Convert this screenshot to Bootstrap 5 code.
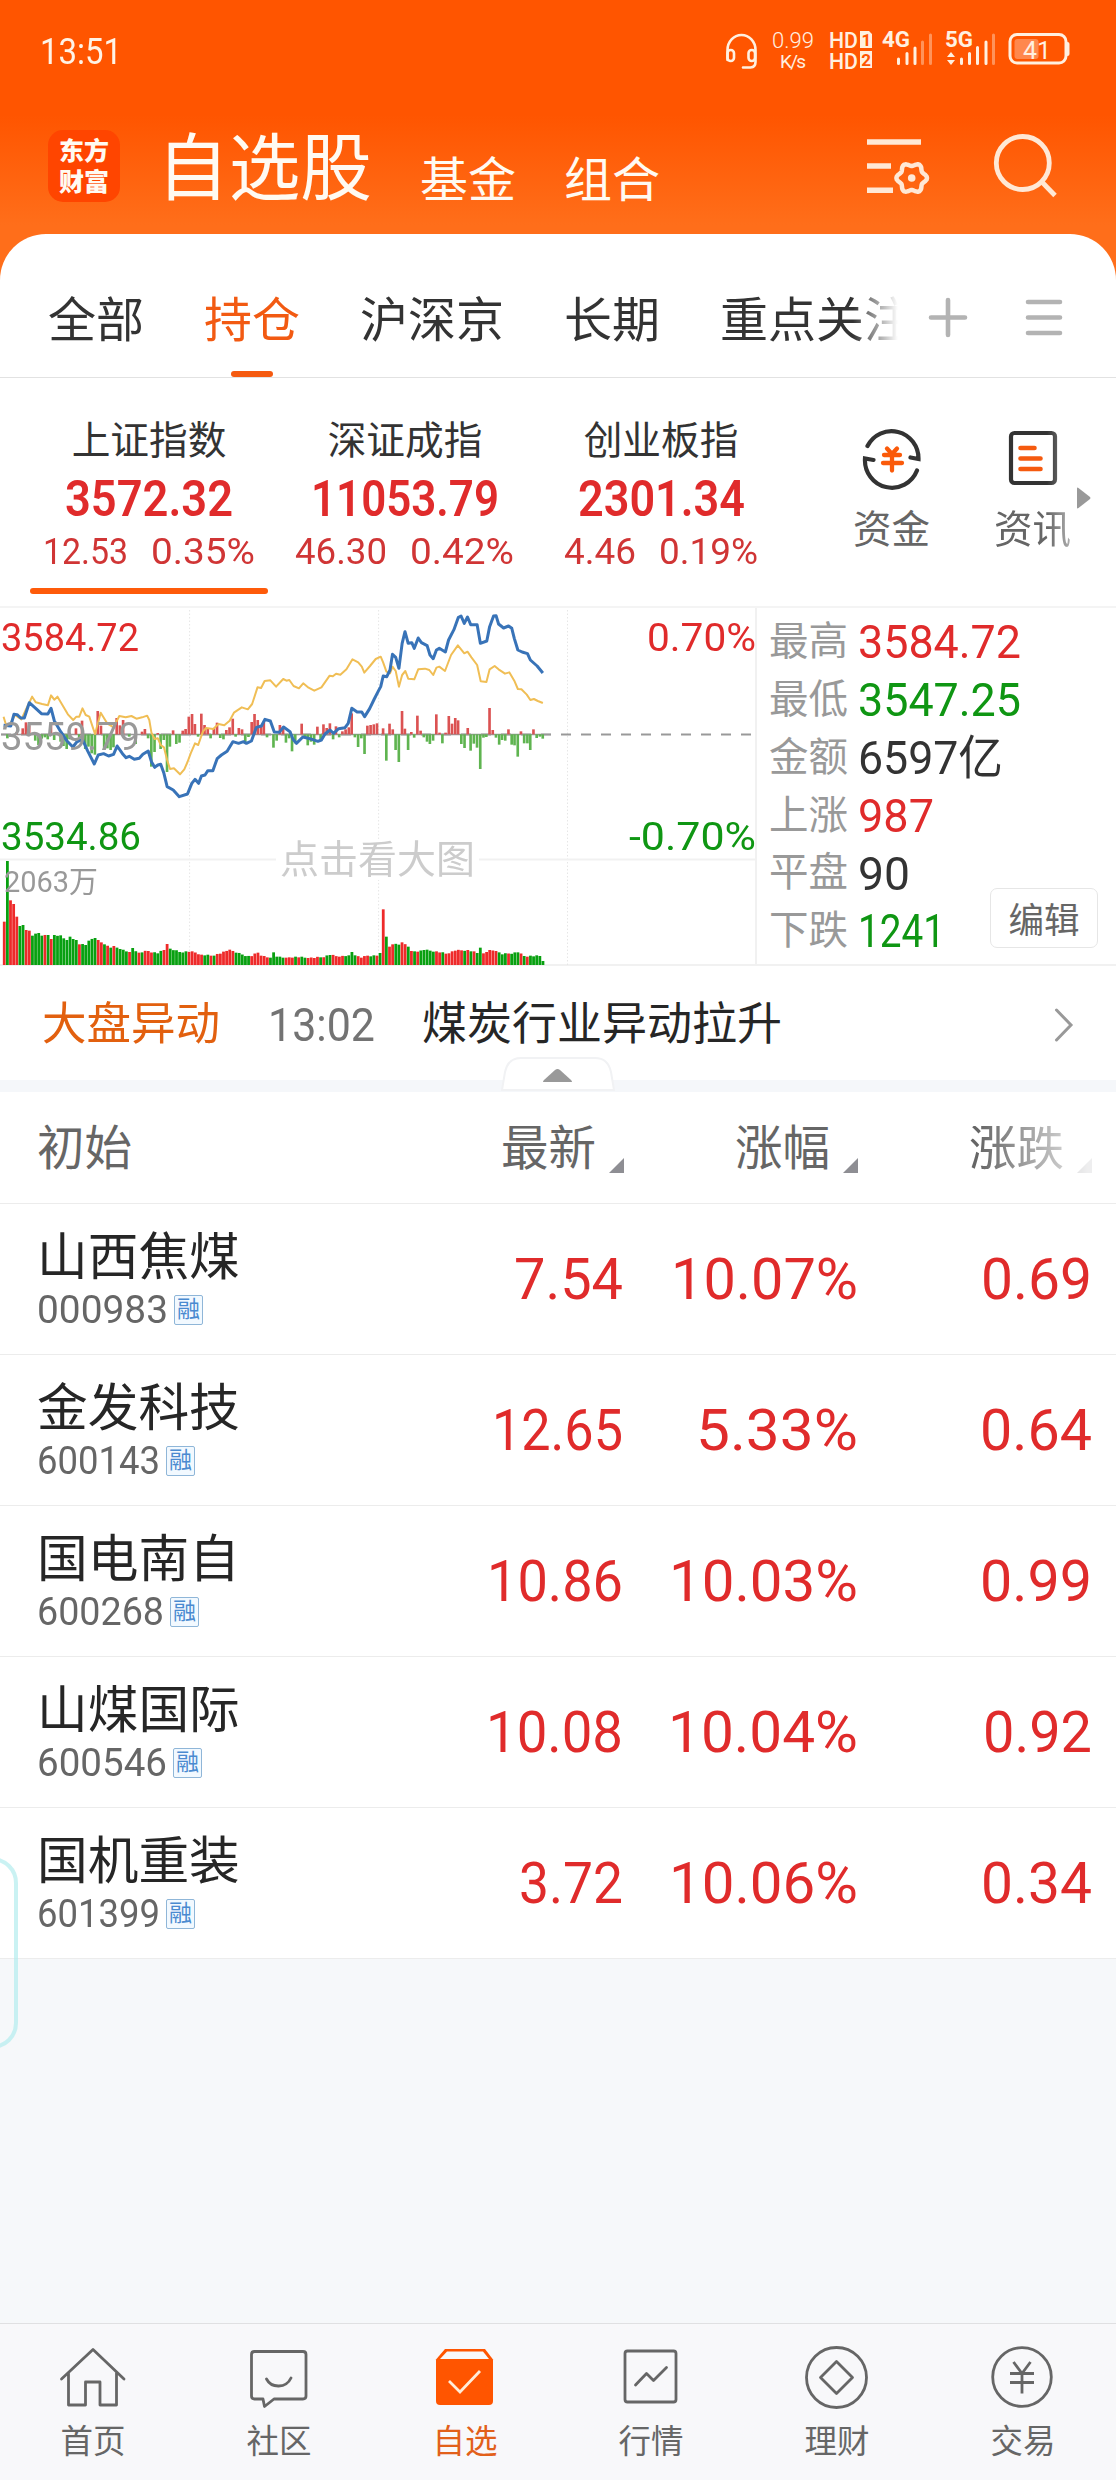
<!DOCTYPE html>
<html lang="zh-CN">
<head>
<meta charset="utf-8">
<meta name="viewport" content="width=device-width, initial-scale=1">
<title>自选股</title>
<link href="https://cdn.jsdelivr.net/npm/bootstrap@5.3.0/dist/css/bootstrap.min.css" rel="stylesheet">
<style>
  body{width:1116px;height:2480px;margin:0;overflow:hidden;background:#f6f8fa;color:#262626;
    font-family:Roboto,"Noto Sans CJK SC",sans-serif;line-height:1;-webkit-font-smoothing:antialiased}
  svg{display:block;flex:none}
  .fit{display:inline-block;white-space:nowrap;transform-origin:0 50%;flex:none}
  .up{color:#e02b2b}.down{color:#0f9613}.g3{color:#333}.g6{color:#666}.g9{color:#999}
  .top-area{height:280px;background:linear-gradient(#ff5500 0,#ff5500 115px,#ff6e1a 225px)}
  .status{height:100px;padding:2px 0 0 40px;font-size:37px;color:#fff3e6}
  .titles{height:134px;padding-left:48px;color:#fffaf2}
  .logo{width:72px;height:72px;border-radius:15px;background:#ff4500;font:900 25px/31px "Noto Sans CJK SC",sans-serif;margin:30px 37px 0 0;padding:4px 0;text-align:center}
  .t-main{font-size:72.5px;line-height:139px}
  .t-sub{font-size:48px;line-height:162px}
  .sheet{margin-top:-46px;border-radius:46px 46px 0 0;background:#fff;position:relative}
  .tabs{height:144px;border-bottom:1px solid #e2e2e2;padding-left:48px;font-size:48px}
  .tab-list{gap:60px;width:852px;overflow:hidden;line-height:113px;height:143px;
    -webkit-mask-image:linear-gradient(90deg,#000 805px,transparent 850px);mask-image:linear-gradient(90deg,#000 805px,transparent 850px)}
  .tab-list span{padding-top:30px}
  .tab-on{color:#f25a12;position:relative}
  .tab-on::after{content:"";position:absolute;left:27px;bottom:0;width:42px;height:6px;border-radius:3px;background:#f55a10}
  .indices{height:230px;padding-left:21px;border-bottom:2px solid #f4f4f4}
  .idx{width:256px;padding-top:38px;position:relative}
  .idx-name{font-size:38.7px;line-height:50px;color:#333}
  .idx-val{font-size:50px;line-height:56px;font-weight:600;margin-top:5px}
  .idx-chg{font-size:36px;line-height:40px;margin-top:5px;color:#d03535}
  .idx-chg .fit{margin-left:-1px}
  .idx-on::after{content:"";position:absolute;left:9px;top:210px;width:238px;height:6px;border-radius:3px;background:#fe5b0a}
  .tool{width:141px;padding-top:48px;font-size:38.5px;color:#666}
  .tool svg{margin-bottom:21px}
  .tool-fade{-webkit-mask-image:linear-gradient(90deg,#000 85px,rgba(0,0,0,.5) 110px);mask-image:linear-gradient(90deg,#000 85px,rgba(0,0,0,.5) 110px)}
  .quote{height:358px;border-bottom:2px solid #f1f1f1}
  .chart{width:757px;height:358px;border-right:2px solid #f1f1f1;position:relative}
  .chart-tag{position:absolute;font-size:38.5px;line-height:40px}
  .facts{padding:5px 0 0 12px;position:relative}
  .fact{height:57.8px;font-size:39.5px;color:#999;gap:10px}
  .fact b{font-weight:400;font-size:47px}
  .edit-btn{position:absolute;left:233px;top:280px;width:108px;height:60px;border:1px solid #e6e6e6;border-radius:7px;background:#fff;color:#666;font-size:35.5px;padding:4px 0 0;line-height:56px}
  .ticker{height:114px;font-size:45px;padding:3px 0 0 42px;position:relative}
  .fold{position:absolute;left:501px;top:91px;z-index:2}
  .band{height:12px;background:#f5f7fa}
  .head-row{height:112px;border-bottom:1px solid #ececec;font-size:47.5px;color:#666;padding:4px 0 0 37px}
  .stock{height:151px;border-bottom:1px solid #ececec;padding-left:38px}
  .c1{width:351px}.c2{width:236px}.c3{width:234px}.c4{width:234px}
  .stock .c1{width:349px}.stock .c3{width:235px}
  .s-name{font-size:50.7px;line-height:60px;margin:-1px 0 0 -1px}
  .s-code{font-size:38.5px;line-height:40px;gap:6px;margin:2px 0 0 -1px;color:#666}
  .rong{width:29px;height:30px;border:1.5px solid #8fb6d8;border-radius:2px;background:#f2f9ff;color:#4a8ad0;font-size:23px;line-height:28px;text-align:center}
  .price{font-size:58px}
  .sort{margin:32px 0 0 13px}
  .hfade{-webkit-mask-image:linear-gradient(90deg,#000 120px,rgba(0,0,0,.15) 230px);mask-image:linear-gradient(90deg,#000 120px,rgba(0,0,0,.15) 230px)}
  .filler{height:364px}
  .bottom{height:157px;border-top:1px solid #e0e0e2;background:#f8f8fa;font-size:32.5px;color:#666}
  .bottom>div{width:186px;padding-top:17px}
  .bottom svg{margin-bottom:13px}
  .on{color:#e2601a}
  .side-handle{position:absolute;left:-34px;top:1857px;width:52px;height:192px;border:4px solid rgba(180,236,238,.7);border-radius:30px;z-index:5}
</style>
<script src="https://cdn.jsdelivr.net/npm/bootstrap@5.3.0/dist/js/bootstrap.bundle.min.js"></script>
</head>
<body>
<header class="top-area">
  <div class="status d-flex align-items-center">
    <span class="fit" data-w="82">13:51</span>
    <svg class="ms-auto" width="352" height="50" viewBox="722 26 352 50" fill="none" stroke="#fff0e0" stroke-width="2.6" stroke-linecap="round" font-family="Roboto,sans-serif" style="margin-right:42px">
      <path d="M727.500 60V50a14 15 0 0 1 28 0V62q0 5-5 5.500H743"/>
      <rect x="727.500" y="50" width="6.500" height="11" rx="3.200"/><rect x="748.500" y="50" width="6.500" height="11" rx="3.200"/>
      <g fill="#fff0e0" stroke="none">
        <text x="772" y="48" font-size="22" font-weight="300" textLength="42">0.99</text>
        <text x="780" y="68" font-size="19" textLength="26">K/s</text>
        <g font-size="21.500" font-weight="500"><text x="829" y="47.500" textLength="29" lengthAdjust="spacingAndGlyphs">HD</text><text x="829" y="68.500" textLength="29" lengthAdjust="spacingAndGlyphs">HD</text></g>
        <path d="M860 31h9l3 3v14h-12zM860 51h12v17h-12z"/>
        <g font-size="17" font-weight="700" fill="#ff5500"><text x="861.500" y="46">1</text><text x="861.300" y="66">2</text></g>
        <g font-size="22" font-weight="700"><text x="882" y="47" textLength="28" lengthAdjust="spacingAndGlyphs">4G</text><text x="945" y="47" textLength="28" lengthAdjust="spacingAndGlyphs">5G</text></g>
        <path d="M951 52l4 5h-8zM951 65l4-5h-8z"/>
      </g>
      <path stroke-width="3" d="M898.500 59v4.500M907 53.500v10M915 48v15.500M961.500 59v4.500M969.500 53.500v10M977.500 47.500v16M986 42v21.500"/>
      <path stroke-width="3" opacity=".4" d="M922.500 42v21.500M930.500 35v28.500M993.500 35v28.500"/>
      <rect x="1010" y="34.500" width="56" height="28.500" rx="7" stroke-width="3"/>
      <path stroke-width="4" d="M1067.500 44v10"/>
      <rect x="1014.500" y="39" width="24" height="20" rx="3" fill="#fff" opacity=".3" stroke="none"/>
      <text x="1023" y="59" font-size="26.500" fill="#fff0e0" stroke="none" textLength="28" lengthAdjust="spacingAndGlyphs">41</text>
    </svg>
  </div>
  <div class="titles d-flex align-items-start">
    <div class="logo">东方<br>财富</div>
    <div class="t-main fit" data-w="215">自选股</div>
    <div class="t-sub" style="margin-left:48px">基金</div>
    <div class="t-sub" style="margin-left:48px">组合</div>
    <svg width="210" height="80" viewBox="862 125 210 80" fill="none" stroke="#ffe8d5" stroke-width="5.500" style="margin:25px 0 0 202px">
      <path d="M867 142h54M867 166h24M867 190.300h26"/>
      <path id="gear" stroke-width="4.500" stroke-linejoin="round"/>
      <circle cx="911.700" cy="178" r="3.800" fill="#ffe8d5" stroke="none"/>
      <circle cx="1022.800" cy="163" r="26.500" stroke-width="4.800"/><path d="M1041 181l14 14.500" stroke-width="4.800"/>
    </svg>
  </div>
</header>

<main class="sheet">
  <nav class="tabs d-flex">
    <div class="tab-list d-flex text-nowrap g3"><span>全部</span><span class="tab-on">持仓</span><span>沪深京</span><span>长期</span><span>重点关注</span></div>
    <svg width="140" height="60" viewBox="926 287 140 60" stroke="#b3b3b3" stroke-width="4.600" stroke-linecap="round" style="margin:53px 0 0 26px">
      <path d="M931 317.500h34M948 300v35M1028 302h32M1028 317.500h32M1028 333h32"/>
    </svg>
  </nav>

  <section class="indices d-flex">
    <div class="idx idx-on text-center"><div class="idx-name">上证指数</div><div class="idx-val up"><span class="fit" data-w="168">3572.32</span></div><div class="idx-chg d-flex justify-content-center" style="gap:24px"><span class="fit" data-w="85">12.53</span><span class="fit" data-w="104">0.35%</span></div></div>
    <div class="idx text-center"><div class="idx-name">深证成指</div><div class="idx-val up"><span class="fit" data-w="188">11053.79</span></div><div class="idx-chg d-flex justify-content-center" style="gap:24px"><span class="fit" data-w="92">46.30</span><span class="fit" data-w="104">0.42%</span></div></div>
    <div class="idx text-center"><div class="idx-name">创业板指</div><div class="idx-val up"><span class="fit" data-w="167">2301.34</span></div><div class="idx-chg d-flex justify-content-center" style="gap:24px"><span class="fit" data-w="72">4.46</span><span class="fit" data-w="99">0.19%</span></div></div>
    <div class="tool d-flex flex-column align-items-center" style="margin-left:32px">
      <svg width="60" height="64" viewBox="862 427 60 64" fill="none" stroke="#333" stroke-width="4.200" stroke-linejoin="miter" stroke-linecap="round">
        <path d="M867.500 446a27 27.500 0 0 1 51 13l-8-1.500M917 470.500a27 27.500 0 0 1-52-12l8.500 1.500" transform="translate(0 1)"/>
        <path stroke="#fa5a0a" stroke-width="4.300" d="M887 449.500l5 5.500l5-5.500M884 456h16M883 464h19M892 456v15.500"/>
      </svg>
      <span>资金</span>
    </div>
    <div class="tool d-flex flex-column align-items-center tool-fade">
      <svg width="60" height="64" viewBox="1003 427 60 64" fill="none" stroke="#333" stroke-width="4.200" stroke-linecap="round">
        <rect x="1011" y="434" width="44" height="50" rx="3.500"/><path stroke="#f55a0f" stroke-width="4.600" d="M1020.500 449h14M1020.500 459.500h20M1020.500 470h20"/>
      </svg>
      <span>资讯</span>
    </div>
    <svg width="14" height="22" viewBox="0 0 14 22" style="margin:109px 0 0 -26px"><path d="M0 1.500Q0 0 1.500 1L13 10q1 1 0 2L1.500 21Q0 22 0 20.500z" fill="#999"/></svg>
  </section>

  <section class="quote d-flex">
    <div class="chart">
      <svg width="755" height="358" viewBox="0 0 755 358">
        <g stroke="#e6e6e6" stroke-width="1" stroke-dasharray="1.500 2"><path d="M189.600 2V357M378.600 2V357M567.500 2V357"/></g>
        <path d="M0 251.600H756" stroke="#f1f1f1" stroke-width="2"/>
        <path d="M1 126.500H756" stroke="#999" stroke-width="2.200" stroke-dasharray="10 10"/>
        <path d="M1 126.500H551" stroke="#999" stroke-width="1.500"/>
        <g transform="scale(.35714 .33333) translate(0 -24)">
          <g id="bars"></g><g id="vols"></g>
          <g fill="none" stroke-linejoin="round">
            <polyline vector-effect="non-scaling-stroke" stroke="#f0be55" stroke-width="2" points="10,350 17,375 28,372 42,345 60,358 72,330 90,290 100,307 118,312 134,316 143,286 152,299 161,290 178,321 190,343 205,360 214,350 222,350 231,325 240,345 250,350 266,402 282,338 300,370 318,382 334,348 352,352 368,348 382,356 398,352 412,347 418,360 424,398 433,417 442,415 450,435 459,442 468,480 476,507 487,505 504,523 516,508 525,486 534,460 546,430 555,435 568,395 577,384 597,387 612,372 628,376 643,362 655,338 677,322 694,328 706,312 721,262 731,264 741,243 757,241 773,260 793,237 802,242 810,240 822,258 837,265 849,250 864,263 880,272 900,262 923,227 932,229 941,221 953,224 970,208 987,178 1003,187 1013,200 1020,218 1036,198 1052,177 1066,170 1073,188 1082,215 1092,220 1099,200 1108,213 1117,260 1126,225 1135,213 1143,236 1160,238 1171,208 1190,206 1202,210 1213,225 1222,203 1230,200 1246,213 1263,165 1282,136 1300,160 1309,155 1320,172 1336,195 1346,244 1362,246 1371,208 1385,198 1396,208 1414,221 1426,217 1440,242 1450,267 1460,268 1475,284 1485,300 1495,297 1506,303 1520,309"/>
            <polyline vector-effect="non-scaling-stroke" stroke="#3873b8" stroke-width="3" points="10,376 30,378 39,343 48,344 58,354 68,354 82,308 100,325 116,341 134,342 143,325 152,362 170,395 187,422 204,441 215,426 231,418 245,452 264,492 275,465 290,461 304,468 318,463 328,438 343,461 353,473 362,469 376,478 390,475 400,463 415,453 424,485 433,502 442,495 450,493 459,520 468,560 485,570 502,590 525,582 537,550 546,538 556,550 564,528 574,525 582,512 596,512 608,476 620,465 636,454 652,425 668,430 682,425 690,430 704,423 718,382 732,378 742,358 757,363 768,396 782,397 794,381 812,395 820,417 830,430 848,411 860,414 874,418 890,424 900,420 910,402 924,390 934,400 948,386 966,383 975,370 985,325 1000,336 1013,336 1021,350 1035,326 1048,297 1060,272 1066,260 1073,228 1083,230 1092,210 1099,163 1108,172 1117,205 1126,130 1134,95 1143,130 1153,128 1160,145 1171,114 1180,128 1196,137 1204,165 1213,176 1222,150 1230,145 1247,156 1256,120 1271,89 1283,53 1291,48 1300,70 1309,51 1318,74 1336,74 1345,130 1363,123 1371,80 1382,48 1389,47 1396,72 1410,84 1424,78 1433,85 1440,115 1450,150 1462,156 1477,161 1485,180 1504,198 1520,219"/>
          </g>
        </g>
      </svg>
      <div class="chart-tag up" style="left:1px;top:10px"><span class="fit" data-w="138">3584.72</span></div>
      <div class="chart-tag g9" style="left:1px;top:109px"><span class="fit" data-w="139">3559.79</span></div>
      <div class="chart-tag down" style="left:1px;top:209px"><span class="fit" data-w="140">3534.86</span></div>
      <div class="chart-tag up" style="right:-1px;top:10px"><span class="fit" data-w="109">0.70%</span></div>
      <div class="chart-tag down" style="right:-1px;top:209px"><span class="fit" data-w="127">-0.70%</span></div>
      <div class="chart-tag g9" style="left:4px;top:254px;font-size:29.5px"><span class="fit" data-w="94">2063万</span></div>
      <div class="chart-tag bg-white px-1" style="left:276px;top:232px;color:#ccc"><span class="fit" data-w="195">点击看大图</span></div>
    </div>
    <div class="facts">
      <div class="fact d-flex align-items-center">最高<b class="up fit" data-w="163">3584.72</b></div>
      <div class="fact d-flex align-items-center">最低<b class="down fit" data-w="163">3547.25</b></div>
      <div class="fact d-flex align-items-center">金额<b class="g3 fit" data-w="145">6597亿</b></div>
      <div class="fact d-flex align-items-center">上涨<b class="up fit" data-w="76">987</b></div>
      <div class="fact d-flex align-items-center">平盘<b class="g3 fit" data-w="52">90</b></div>
      <div class="fact d-flex align-items-center">下跌<b class="down fit" data-w="87">1241</b></div>
      <button class="edit-btn">编辑</button>
    </div>
  </section>

  <section class="ticker d-flex align-items-center">
    <span class="fit" data-w="178" style="color:#e2600f">大盘异动</span>
    <span class="fit" data-w="107" style="margin-left:48px;color:#737373;font-size:46px">13:02</span>
    <span style="margin-left:47px">煤炭行业异动拉升</span>
    <svg class="ms-auto" width="20" height="36" viewBox="0 0 20 36" fill="none" stroke="#999" stroke-width="3" stroke-linecap="round" style="margin-right:42px"><path d="M2.500 3L17 18L2.500 33"/></svg>
    <svg class="fold" width="114" height="34" viewBox="0 0 114 34"><path d="M1 33L4 15Q7 1 20 1H94Q107 1 110 15L113 33z" fill="#fff" stroke="#f1f2f4" stroke-width="2"/><path d="M42 25q0-1 1-2L54 13q2.500-2 5 0L70 23q1 1 1 2z" fill="#999"/></svg>
  </section>
  <div class="band"></div>

  <section class="head-row d-flex align-items-center">
    <div class="c1">初始</div>
    <div class="c2 d-flex justify-content-end">最新<svg class="sort" width="15" height="15"><path d="M15 0V15H0z" fill="#8e8e93"/></svg></div>
    <div class="c3 d-flex justify-content-end">涨幅<svg class="sort" width="15" height="15"><path d="M15 0V15H0z" fill="#8e8e93"/></svg></div>
    <div class="c4 d-flex justify-content-end hfade">涨跌<svg class="sort" width="15" height="15"><path d="M15 0V15H0z" fill="#8e8e93"/></svg></div>
  </section>
  <div id="stocks"></div>
</main>
<div class="filler"></div>

<footer class="bottom d-flex text-center">
  <div class="d-flex flex-column align-items-center"><svg width="70" height="72" viewBox="58 2341 70 72" fill="none" stroke="#666" stroke-width="2.800" stroke-linejoin="round" stroke-linecap="round"><path d="M61.500 2379L93 2349.500L124 2379M68.500 2373v32H85.500v-23H100v23H116.500v-32"/></svg>首页</div>
  <div class="d-flex flex-column align-items-center"><svg width="70" height="72" viewBox="244 2341 70 72" fill="none" stroke="#666" stroke-width="2.800" stroke-linejoin="round" stroke-linecap="round"><path d="M254 2351.500H303q3 0 3 3V2396q0 3-3 3H274L264.500 2406.500L263 2399H254.500q-3 0-3-3V2354.500q0-3 3-3zM266.500 2379c5 9.500 19.500 9.500 24.500-1"/></svg>社区</div>
  <div class="d-flex flex-column align-items-center on"><svg width="70" height="72" viewBox="430 2341 70 72"><path d="M445 2349H485L493 2359.500V2401q0 4-4 4H440q-4 0-4-4V2359.500z" fill="#ff5500"/><path d="M447 2351.500H483L489 2359H440z" fill="#f8f8fa"/><path d="M449 2381L460 2392L480 2371" fill="none" stroke="#ffecd8" stroke-width="2.800"/></svg>自选</div>
  <div class="d-flex flex-column align-items-center"><svg width="70" height="72" viewBox="616 2341 70 72" fill="none" stroke="#666" stroke-width="2.800" stroke-linejoin="round" stroke-linecap="round"><rect x="625" y="2351" width="51" height="51" rx="2.500"/><path d="M635.500 2385L646.500 2373.500L653.500 2380.500L666.500 2367.500"/></svg>行情</div>
  <div class="d-flex flex-column align-items-center"><svg width="70" height="72" viewBox="802 2341 70 72" fill="none" stroke="#666" stroke-width="2.800" stroke-linejoin="round"><circle cx="836.500" cy="2377.500" r="30"/><path d="M836.500 2361.500L852.500 2377.500L836.500 2393.500L820.500 2377.500z"/></svg>理财</div>
  <div class="d-flex flex-column align-items-center"><svg width="70" height="72" viewBox="988 2341 70 72" fill="none" stroke="#666" stroke-width="2.800"><circle cx="1022" cy="2377" r="29.300"/><path d="M1013.500 2362L1022 2373.500L1030.500 2362M1010 2373.500H1034M1010 2382.500H1034M1022 2373V2393.500"/></svg>交易</div>
</footer>
<div class="side-handle"></div>

<script>
  const stocks = [
    ['山西焦煤','000983',131,'7.54',109,'10.07%',187,'0.69',111],
    ['金发科技','600143',123,'12.65',131,'5.33%',162,'0.64',112],
    ['国电南自','600268',127,'10.86',136,'10.03%',189,'0.99',112],
    ['山煤国际','600546',130,'10.08',137,'10.04%',190,'0.92',109],
    ['国机重装','601399',123,'3.72',104,'10.06%',189,'0.34',111]
  ];
  document.getElementById('stocks').innerHTML = stocks.map(s => `
    <div class="stock d-flex align-items-center">
      <div class="c1"><div class="s-name">${s[0]}</div>
        <div class="s-code d-flex align-items-center"><span class="fit" data-w="${s[2]}">${s[1]}</span><span class="rong">融</span></div></div>
      <div class="c2 price up text-end"><span class="fit" data-w="${s[4]}">${s[3]}</span></div>
      <div class="c3 price up text-end"><span class="fit" data-w="${s[6]}">${s[5]}</span></div>
      <div class="c4 price up text-end"><span class="fit" data-w="${s[8]}">${s[7]}</span></div>
    </div>`).join('');

  document.querySelectorAll('.fit').forEach(el => {
    const n = el.getBoundingClientRect().width, w = +el.dataset.w;
    el.style.transform = `scaleX(${w / n})`;
    el.style.marginRight = `${w - n}px`;
  });

  // Gear outline with six lobes
  let d = '';
  for (let a = 0; a < 360; a += 6) {
    const t = a * Math.PI / 180, r = 13.6 + 1.7 * Math.cos(6 * t);
    d += (a ? 'L' : 'M') + (911.7 + r * Math.cos(t)).toFixed(1) + ' ' + (178 + r * Math.sin(t)).toFixed(1);
  }
  document.getElementById('gear').setAttribute('d', d + 'z');

  const rect = (x, y, w, h, f) => `<rect x="${x}" y="${y}" width="${w}" height="${h}" fill="${f}"/>`;

  // Momentum bars around the previous close
  const mom = [[21,415],[47,396],[64,385],[73,367],[82,376],[99,422],[108,435],[117,416],[126,412],[134,418],[143,372],[152,420],[170,425],[178,438],[187,447],[195,418],[213,385],[222,422],[230,362],[239,447],[248,440],[257,460],[266,464],[274,333],[283,377],[292,450],[301,445],[310,450],[318,442],[327,354],[336,376],[345,360],[362,410],[380,432],[398,395],[406,387],[415,415],[424,500],[433,456],[442,399],[450,447],[459,420],[468,516],[476,440],[485,391],[494,432],[503,428],[512,392],[520,387],[529,350],[538,342],[546,372],[555,410],[564,341],[573,375],[582,386],[590,415],[599,385],[608,368],[617,414],[626,418],[634,390],[643,382],[652,356],[660,410],[669,384],[678,388],[687,432],[696,411],[705,366],[713,342],[722,360],[731,375],[739,366],[748,412],[766,443],[775,422],[784,375],[793,380],[801,428],[810,415],[818,454],[827,430],[845,371],[854,412],[862,436],[871,425],[880,434],[889,380],[898,420],[906,373],[915,384],[924,370],[933,418],[941,379],[950,412],[959,394],[968,388],[977,382],[985,340],[994,412],[1003,441],[1012,415],[1021,462],[1029,377],[1038,375],[1047,373],[1056,370],[1073,385],[1082,482],[1091,371],[1100,388],[1108,450],[1117,486],[1126,333],[1134,386],[1143,450],[1152,396],[1160,413],[1169,347],[1178,392],[1187,412],[1196,425],[1204,432],[1213,422],[1222,343],[1231,398],[1239,430],[1248,398],[1257,348],[1266,371],[1275,354],[1283,361],[1292,432],[1301,444],[1310,384],[1318,452],[1327,431],[1336,443],[1345,507],[1354,413],[1362,411],[1371,324],[1380,390],[1389,413],[1398,434],[1406,420],[1415,422],[1424,388],[1433,434],[1441,436],[1450,470],[1459,394],[1468,430],[1477,430],[1485,450],[1494,388],[1503,414],[1512,410],[1520,416]];
  document.getElementById('bars').innerHTML = mom.map(([x, y]) =>
    y < 403 ? rect(x - 4, y, 7.4, 403 - y, '#db5252') : rect(x - 4, 403, 7.4, y - 403, '#5fb450')).join('');

  // Volume: key levels, interpolated one bar per minute slot
  const key = [[12,965],[21,783],[29,901],[38,912],[47,950],[56,978],[64,975],[73,990],[82,992],[91,1007],[108,999],[117,1007],[134,1005],[143,1017],[152,1005],[169,1006],[178,1015],[187,1020],[196,1010],[204,1017],[213,1020],[222,1033],[239,1035],[248,1022],[266,1014],[274,1020],[292,1033],[310,1043],[318,1038],[336,1047],[362,1056],[371,1044],[388,1058],[415,1053],[441,1060],[459,1050],[467,1032],[476,1046],[503,1056],[538,1054],[564,1064],[590,1067],[617,1061],[643,1049],[660,1058],[700,1070],[722,1058],[735,1068],[757,1073],[766,1057],[775,1070],[801,1073],[827,1070],[862,1074],[898,1072],[924,1065],[950,1070],[977,1066],[985,1056],[994,1066],[1012,1073],[1030,1067],[1056,1067],[1065,1059],[1073,928],[1082,1010],[1091,1040],[1100,1033],[1117,1034],[1126,1027],[1143,1040],[1152,1053],[1170,1055],[1187,1050],[1222,1054],[1248,1061],[1275,1052],[1310,1050],[1336,1059],[1345,1043],[1354,1060],[1371,1050],[1389,1053],[1406,1063],[1450,1057],[1468,1068],[1512,1068],[1520,1083]];
  const hues =
    'rgrrrggrrggggrgrggggggggrgggggrrgrgrggggrggrgrrrgggrrggggggrrrrrggrgrrrrrr' +
    'gggggrrrrrrgggggrrrgrggrrrrgrggrrrrggggrrrrggrgr' +
    'grrggrrgrgrgggggrrgrrrrrrgrgrggrrrrrgggrgggrgrggggg';
  let out = '';
  for (let i = 0; i < 173; i++) {
    const x = 12 + i * 8.77;
    let k = 0;
    while (k < key.length - 2 && key[k + 1][0] < x) k++;
    const [x0, y0] = key[k], [x1, y1] = key[k + 1];
    const near = key.find(p => Math.abs(p[0] - x) < 3);
    const y = near ? near[1] : y0 + (y1 - y0) * Math.min(1, (x - x0) / (x1 - x0)) + (i * 7 % 5) - 2;
    out += rect((x - 4).toFixed(1), y.toFixed(1), 7.8, (1095 - y).toFixed(1), i === 121 || hues[i] === 'r' ? '#ee2a2a' : '#08a010');
  }
  document.getElementById('vols').innerHTML = out;
</script>
</body>
</html>
